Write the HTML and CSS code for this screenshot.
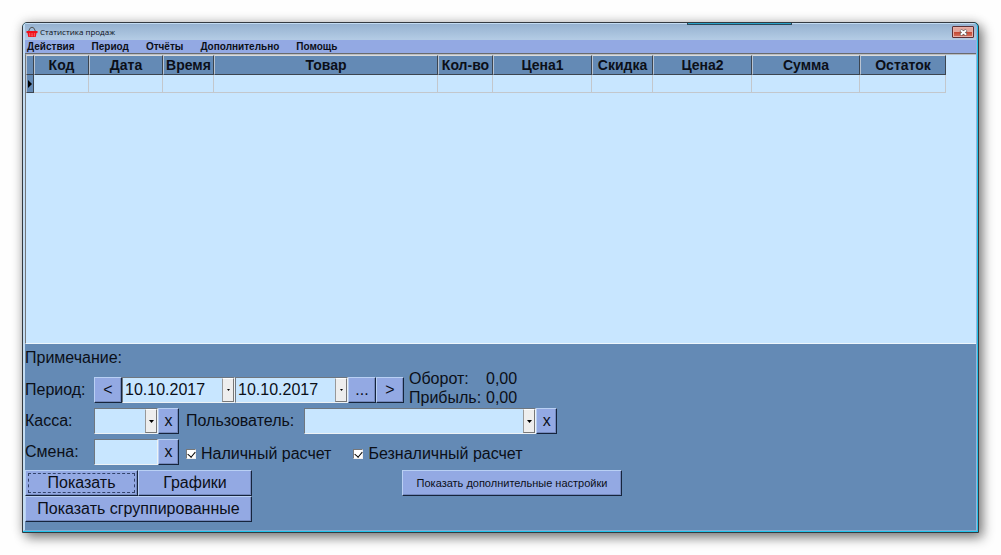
FILE: index.html
```html
<!DOCTYPE html>
<html lang="ru">
<head>
<meta charset="utf-8">
<title>Статистика продаж</title>
<link rel="stylesheet" href="styles.css">
</head>
<body>
<div class="window">
  <span class="top-tab"></span>
  <div class="frame">
    <header class="titlebar">
      <svg class="app-icon" viewBox="0 0 12 12" aria-hidden="true">
        <path d="M2.500 5.500L4 2.200Q6 .2 8 2.200L9.500 5.500" fill="none" stroke="#555" stroke-width="1"/>
        <path d="M.5 5h11v2h-1l-.8 4H2.300l-.8-4h-1z" fill="#f01018"/>
        <path d="M3 8h1.300M5.400 8h1.300M7.800 8h1.300M3.300 9.800h1M5.400 9.800h1.300M7.800 9.800h1" stroke="#fcc" stroke-width=".7"/>
      </svg>
      <h1 class="title">Статистика продаж</h1>
      <button class="close" type="button" aria-label="Закрыть">
        <svg viewBox="0 0 9 7" aria-hidden="true"><path d="M1.500 1l6 5M7.500 1l-6 5" stroke="#555" stroke-width="3"/><path d="M1.800 1.200l5.400 4.600M7.200 1.200L1.800 5.800" stroke="#fff" stroke-width="1.800"/></svg>
      </button>
    </header>
    <nav class="menu">
      <a href="#">Действия</a><a href="#">Период</a><a href="#">Отчёты</a><a href="#">Дополнительно</a><a href="#">Помощь</a>
    </nav>
    <main class="grid">
      <table class="sales">
        <colgroup><col class="c-mark"><col class="c-code"><col class="c-date"><col class="c-time"><col class="c-item"><col class="c-qty"><col class="c-price"><col class="c-disc"><col class="c-price"><col class="c-sum"><col class="c-rest"></colgroup>
        <thead><tr><th></th><th>Код</th><th>Дата</th><th>Время</th><th>Товар</th><th>Кол-во</th><th>Цена1</th><th>Скидка</th><th>Цена2</th><th>Сумма</th><th>Остаток</th></tr></thead>
        <tbody><tr><td class="mark"><svg viewBox="0 0 4 8" aria-hidden="true"><path d="M0 0l4 4-4 4z"/></svg></td><td></td><td></td><td></td><td></td><td></td><td></td><td></td><td></td><td></td><td></td></tr></tbody>
      </table>
    </main>
    <form class="panel">
      <div class="row note">Примечание:</div>
      <div class="row">
        <label class="name" for="from">Период:</label>
        <button class="btn step" type="button">&lt;</button>
        <span class="field date"><input id="from" type="text" value="10.10.2017"><button class="drop" type="button" aria-label="Выбрать начало"><svg viewBox="0 0 3 2"><path d="M0 0h3L1.500 2z"/></svg></button></span>
        <span class="field date"><input type="text" value="10.10.2017" aria-label="Конец периода"><button class="drop" type="button" aria-label="Выбрать конец"><svg viewBox="0 0 3 2"><path d="M0 0h3L1.500 2z"/></svg></button></span>
        <button class="btn step" type="button">...</button>
        <button class="btn step" type="button">&gt;</button>
        <dl class="totals"><dt>Оборот:</dt><dd>0,00</dd><dt>Прибыль:</dt><dd>0,00</dd></dl>
      </div>
      <div class="row">
        <label class="name" for="till">Касса:</label>
        <span class="field short"><select id="till"><option></option></select><span class="drop cover"><svg class="wide" viewBox="0 0 5 3"><path d="M0 0h5L2.500 3z"/></svg></span></span>
        <button class="btn clear" type="button">x</button>
        <label class="user" for="user">Пользователь:</label>
        <span class="field long"><select id="user"><option></option></select><span class="drop cover"><svg class="wide" viewBox="0 0 5 3"><path d="M0 0h5L2.500 3z"/></svg></span></span>
        <button class="btn clear" type="button">x</button>
      </div>
      <div class="row">
        <label class="name" for="shift">Смена:</label>
        <span class="field short"><input id="shift" type="text"></span>
        <button class="btn clear" type="button">x</button>
        <label class="check"><input type="checkbox" checked>Наличный расчет</label>
        <label class="check"><input type="checkbox" checked>Безналичный расчет</label>
      </div>
      <div class="actions">
        <div class="group">
          <button class="btn focused" type="button">Показать</button>
          <button class="btn" type="button">Графики</button>
          <button class="btn full" type="button">Показать сгруппированные</button>
        </div>
        <button class="btn more" type="button">Показать дополнительные настройки</button>
      </div>
    </form>
  </div>
</div>
</body>
</html>
```
FILE: styles.css
```css
* { box-sizing: border-box; }
body {
  margin: 0;
  padding: 22px;
  min-height: 100vh;
  display: flex;
  background: #fefefe;
  color: #0b0f18;
  font: 16px/18px "Liberation Sans", Arial, sans-serif;
}
button, input, select { font: inherit; color: inherit; margin: 0; padding: 0; border-radius: 0; }
.window {
  position: relative;
  flex: 1;
  display: flex;
  border: 1px solid #343a40;
  border-radius: 5px 5px 0 0;
  background: #20c4ec;
  box-shadow: 4px 5px 12px rgba(0, 0, 0, .45), 0 0 12px rgba(0, 0, 0, .2);
}
.top-tab {
  position: absolute;
  top: 0;
  left: 69.500%;
  width: 11%;
  height: 2px;
  background: #2aa3c8;
  border: 1px solid #2a4557;
  border-top: 0;
}
.frame {
  flex: 1;
  display: flex;
  flex-direction: column;
  margin: 0 1px 1px 0;
  border: 1px solid;
  border-color: #c3dcf2 #9ab4d8 #86a9d0 #c3dcf2;
  border-left-width: 2px;
  border-radius: 4px 4px 0 0;
  background: #648ab5;
}
.titlebar {
  display: flex;
  align-items: center;
  height: 16px;
  padding: 0 2px 0 1px;
  background: linear-gradient(#96b2d0, #b4cce5);
}
.app-icon { width: 12px; height: 12px; margin-right: 2px; }
.title { margin: 0; flex: 1; font: 8px/12px "Open Sans", sans-serif; }
.close {
  display: grid;
  place-items: center;
  width: 22px;
  height: 12px;
  border: 1px solid #5c3035;
  border-radius: 1px;
  background: linear-gradient(#e3a59c 0 45%, #c44631 50%, #d47462);
  box-shadow: inset 0 0 0 1px #e8b0a8;
}
.close svg { width: 9px; height: 7px; }
.menu {
  display: flex;
  gap: 17px;
  height: 13px;
  padding-left: 2px;
  background: #93a9e3;
  font: bold 10px/13px "Liberation Sans", Arial, sans-serif;
}
.menu a { color: inherit; text-decoration: none; }
.grid {
  flex: 1;
  border: solid #74777b;
  border-width: 2px 0 1px 1px;
  border-top: 2px groove #b9bdc2;
  border-bottom-color: #eef6fc;
  background: #c8e6ff;
}
.sales { table-layout: fixed; width: 920px; border-collapse: separate; border-spacing: 0; }
.c-mark { width: 8px; }
.c-code { width: 55px; }
.c-date { width: 74px; }
.c-time { width: 51px; }
.c-item { width: 224px; }
.c-qty { width: 55px; }
.c-price { width: 99px; }
.c-disc { width: 61px; }
.c-sum { width: 108px; }
.c-rest { width: 86px; }
.sales th {
  height: 20px;
  padding: 0;
  background: #648ab5;
  border: 1px solid;
  border-color: #dcdcdc #3c4550 #3c4550 #b9c4d2;
  font: bold 14px/18px "Liberation Sans", Arial, sans-serif;
}
.sales td { height: 18px; padding: 0; border: solid #c3c7cc; border-width: 0 1px 1px 0; }
.sales .mark { background: #648ab5; border-color: #3c4550; border-left: 1px solid #b9c4d2; }
.mark svg { display: block; width: 4px; height: 8px; margin-left: 1px; }
.panel { display: flex; flex-direction: column; gap: 5px; padding-bottom: 8px; }
.row { display: flex; height: 26px; align-items: center; }
.note { height: 28px; }
.name { width: 69px; }
.btn {
  height: 26px;
  border: 1px solid;
  border-color: #b9d0f4 #16243c #16243c #b9d0f4;
  background: #93a9e3;
  box-shadow: inset -1px -1px #7489bd;
}
.step { width: 28px; }
.clear { width: 21px; }
.field {
  position: relative;
  display: flex;
  height: 26px;
  border: 1px solid;
  border-color: #70777f #eef2f5 #eef2f5 #70777f;
  background: #c8e6ff;
}
.field input, .field select { flex: 1; min-width: 0; width: 100%; border: 0; background: transparent; appearance: none; outline: 0; padding-left: 2px; }
.date { width: 113px; }
.short { width: 64px; }
.long { width: 232px; margin-left: 10px; }
.drop {
  display: grid;
  place-items: center;
  width: 12px;
  border: 1px solid;
  border-color: #fff #777 #777 #999;
  background: #eeeeee;
}
.cover { position: absolute; top: 0; right: 0; bottom: 0; pointer-events: none; }
.drop svg { width: 3px; height: 2px; }
.drop .wide { width: 5px; height: 3px; }
.totals { display: grid; grid-template-columns: 77px auto; margin: -4px 0 0 5px; line-height: 19px; }
.totals dd { margin: 0; }
.user { margin-left: 7px; }
.check { display: flex; align-items: center; gap: 5px; margin-left: 7px; padding-top: 4px; }
.check + .check { margin-left: 22px; }
.check input {
  position: relative;
  width: 10px;
  height: 10px;
  appearance: none;
  border: 1px solid;
  border-color: #777 #eee #eee #777;
  background: #fff;
}
.check input:checked::after {
  content: "";
  position: absolute;
  left: 2px;
  top: 0;
  width: 4px;
  height: 6px;
  border: solid #000;
  border-width: 0 1px 1px 0;
  transform: rotate(40deg);
}
.actions { display: flex; align-items: flex-start; gap: 150px; }
.group { display: grid; grid-template-columns: 113px 114px; }
.full { grid-column: span 2; }
.focused { outline: 1px dashed #33436b; outline-offset: -4px; }
.more { width: 220px; font-size: 11px; }
```
